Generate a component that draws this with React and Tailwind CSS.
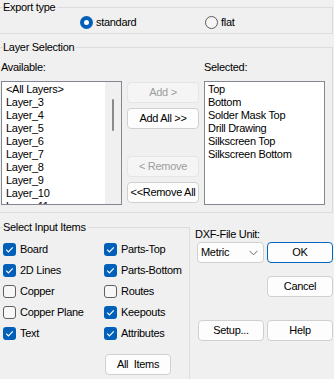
function Radio({ on, label }) {
  return (
    <div className="flex items-center">
      {on ? (
        <span className="w-[13px] h-[13px] rounded-full bg-[#005fb8] flex items-center justify-center">
          <span className="w-[5px] h-[5px] rounded-full bg-white" />
        </span>
      ) : (
        <span className="w-[13px] h-[13px] rounded-full border border-[#5c5c5c] bg-[#f6f6f6]" />
      )}
      <span className="ml-[3px]">{label}</span>
    </div>
  );
}

function Check({ on, label }) {
  return (
    <div className="flex items-center h-[21px]">
      {on ? (
        <span className="w-[13px] h-[13px] rounded-[3px] bg-[#005fb8] flex items-center justify-center">
          <svg width="13" height="13" viewBox="0 0 13 13">
            <path d="M3.2 6.7 L5.4 8.9 L9.8 4.3" fill="none" stroke="white" strokeWidth="1.2" />
          </svg>
        </span>
      ) : (
        <span className="w-[13px] h-[13px] rounded-[3px] border border-[#5f5f5f] bg-[#f7f7f7]" />
      )}
      <span className="ml-[4px]">{label}</span>
    </div>
  );
}

function Btn({ children, disabled, primary, className = "" }) {
  let look = "border-[#d0d0d0] bg-[#fdfdfd] text-black";
  if (disabled) look = "border-[#e5e5e5] bg-[#f5f5f5] text-[#9d9d9d]";
  if (primary) look = "border-[#0067c0] bg-[#fdfdfd] text-black";
  return (
    <div className={`flex items-center justify-center h-[21px] rounded-[4px] border whitespace-pre ${look} ${className}`}>
      {children}
    </div>
  );
}

const available = ["<All Layers>", "Layer_3", "Layer_4", "Layer_5", "Layer_6", "Layer_7", "Layer_8", "Layer_9", "Layer_10", "Layer_11"];
const selected = ["Top", "Bottom", "Solder Mask Top", "Drill Drawing", "Silkscreen Top", "Silkscreen Bottom"];

export default function App() {
  return (
    <div className="w-[334px] h-[379px] overflow-hidden bg-[#f0f0f0] text-[11px] tracking-[-0.3px] leading-[15px] text-black font-['Liberation_Sans',Arial,sans-serif]">
      {/* export type */}
      <fieldset className="ml-[-2px] w-[335px] border border-[#dcdcdc] pb-[4px]">
        <legend className="ml-[4px] pr-[2px] leading-[15px]">Export type</legend>
        <div className="flex h-[14px] items-center pl-[81px]">
          <div className="w-[125px]">
            <Radio on label="standard" />
          </div>
          <Radio label="flat" />
        </div>
      </fieldset>

      {/* layer selection */}
      <fieldset className="mt-[6px] ml-[-2px] w-[335px] border border-[#dcdcdc] pb-[7px]">
        <legend className="ml-[4px] pr-[2px] leading-[15px]">Layer Selection</legend>
        <div className="flex pl-[2px]">
          <div className="w-[121px]">
            <div className="mt-[5px]">Available:</div>
            <div className="mt-[6px] h-[124px] border border-[#828790] bg-white flex overflow-hidden">
              <div className="flex-1 pt-[1px] pl-[4px] leading-[13px]">
                {available.map((l) => (
                  <div key={l}>{l}</div>
                ))}
              </div>
              <div className="w-[16px] bg-[#f0f0f0] flex justify-center pt-[17px]">
                <div className="w-[2px] h-[32px] rounded-full bg-[#8a8a8a]" />
              </div>
            </div>
          </div>

          <div className="ml-[5px] w-[72px] flex flex-col">
            <Btn disabled className="mt-[27px] h-[20px]">Add &gt;</Btn>
            <Btn className="mt-[5px] h-[20px]">Add All &gt;&gt;</Btn>
            <Btn disabled className="mt-[27px] h-[20px]">&lt; Remove</Btn>
            <Btn className="mt-[5px] h-[20px]">&lt;&lt;Remove All</Btn>
          </div>

          <div className="ml-[5px] w-[121px]">
            <div className="mt-[5px]">Selected:</div>
            <div className="mt-[6px] h-[124px] border border-[#828790] bg-white pt-[1px] pl-[3px] leading-[13px]">
              {selected.map((l) => (
                <div key={l}>{l}</div>
              ))}
            </div>
          </div>
        </div>
      </fieldset>

      <div className="flex mt-[7px]">
        {/* input items */}
        <fieldset className="ml-[-2px] w-[192px] border border-[#dcdcdc] pb-[20px]">
          <legend className="ml-[4px] pr-[2px] leading-[15px]">Select Input Items</legend>
          <div className="flex mt-[4px] pl-[4px]">
            <div className="w-[101px]">
              <Check on label="Board" />
              <Check on label="2D Lines" />
              <Check label="Copper" />
              <Check label="Copper Plane" />
              <Check on label="Text" />
            </div>
            <div>
              <Check on label="Parts-Top" />
              <Check on label="Parts-Bottom" />
              <Check label="Routes" />
              <Check on label="Keepouts" />
              <Check on label="Attributes" />
            </div>
          </div>
          <Btn className="mt-[10px] ml-[106px] w-[66px]">{"All  Items"}</Btn>
        </fieldset>

        {/* right side */}
        <div className="ml-[7px] flex flex-col">
          <div className="mt-[7px] ml-[-2px]">DXF-File Unit:</div>
          <div className="flex">
            <div className="w-[67px] h-[21px] flex items-center justify-between rounded-[4px] border border-[#d0d0d0] bg-[#fdfdfd] pl-[3px] pr-[5px]">
              <span>Metric</span>
              <svg width="9" height="6" viewBox="0 0 9 6">
                <path d="M0.5 0.8 L4.5 4.8 L8.5 0.8" fill="none" stroke="#6b6b6b" strokeWidth="1" />
              </svg>
            </div>
            <Btn primary className="ml-[3px] w-[66px]">OK</Btn>
          </div>
          <Btn className="mt-[13px] ml-[70px] w-[66px]">Cancel</Btn>
          <div className="flex mt-[23px] ml-[1px]">
            <Btn className="w-[66px]">Setup...</Btn>
            <Btn className="ml-[3px] w-[66px]">Help</Btn>
          </div>
        </div>
      </div>
    </div>
  );
}
